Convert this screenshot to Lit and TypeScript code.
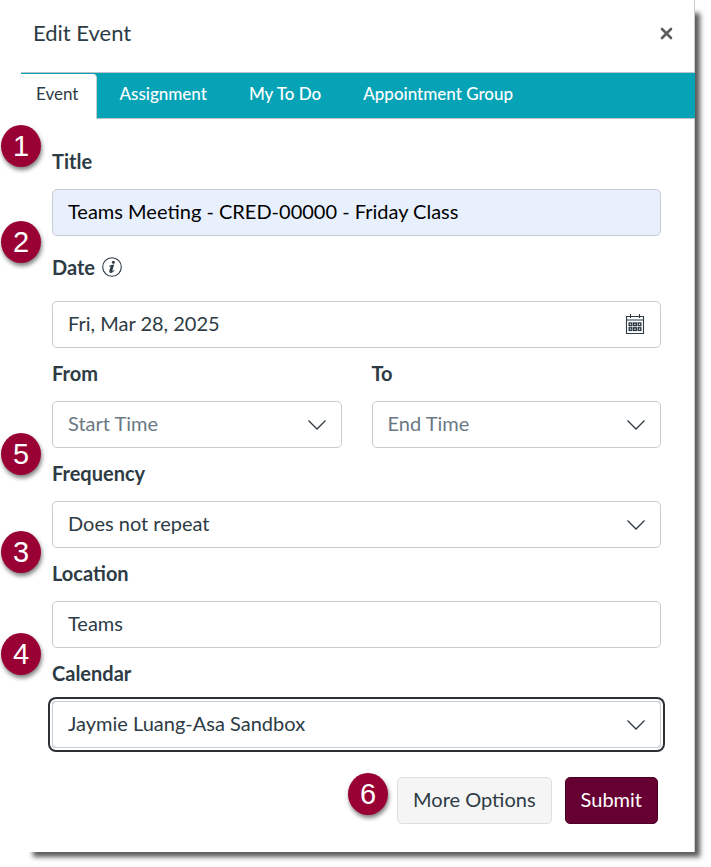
import { LitElement, html, css, svg, nothing } from "lit";
import { customElement, property } from "lit/decorators.js";
import { styleMap } from "lit/directives/style-map.js";

const chevron = html`<svg class="chevron" width="20" height="12" viewBox="0 0 20 12" aria-hidden="true">
  <path d="M1.5 1.5 L10 10 L18.5 1.5" fill="none" stroke="#2d3b45" stroke-width="1.3" />
</svg>`;

const calendarIcon = html`<svg width="20" height="22" viewBox="0 0 20 22" fill="none" stroke="#2d3b45" aria-hidden="true">
  <path d="M1.5 3.5 H18.5 V20.5 H1.5 Z M1.5 7 H18.5 M5.5 1 V5 M14.5 1 V5" stroke-width="1.1" />
  ${[4.2, 8.7, 13.2].map((x) => [10, 14.8].map((y) => svg`<rect x=${x} y=${y} width="2.6" height="2.6" stroke-width="1.4" />`))}
</svg>`;

const infoIcon = html`<svg width="20" height="20" viewBox="0 0 20 20" aria-hidden="true">
  <circle cx="10" cy="10" r="9.3" fill="none" stroke="#2d3b45" stroke-width="1.1" />
  <circle cx="11.4" cy="5.2" r="1.5" fill="#2d3b45" />
  <path d="M7 9.1 C8.4 8.2 10 7.9 12.2 7.6 L10.4 13.6 C10.2 14.5 10.8 14.2 12.1 12.7 L12.6 13.1 C11.2 15.4 9.6 16.1 8.4 15.9 C7.2 15.7 7.1 14.7 7.4 13.6 L8.6 9.5 C8.4 9 7.9 9.3 7.2 9.7 Z" fill="#2d3b45" />
</svg>`;

@customElement("step-badge")
export class StepBadge extends LitElement {
  @property({ type: Number }) step = 1;

  static styles = css`
    :host {
      display: flex;
      align-items: center;
      justify-content: center;
      width: 40px;
      height: 42px;
      border-radius: 50%;
      background: #990033;
      color: #fff;
      font: 29px/42px "Liberation Sans", Arial, sans-serif;
      box-shadow: 1px 3px 4px rgba(0, 0, 0, 0.5);
    }
  `;

  render() {
    return html`<span>${this.step}</span>`;
  }
}

@customElement("app-root")
export class AppRoot extends LitElement {
  static styles = css`
    :host {
      display: block;
      background: #fff;
      padding: 0 16px 15px 0;
      color: #2d3b45;
      font: 20px/24px Lato, "Liberation Sans", sans-serif;
    }
    * {
      box-sizing: border-box;
    }
    .dialog {
      position: relative;
      z-index: 0;
    }
    .dialog::before {
      content: "";
      position: absolute;
      z-index: -2;
      inset: 10px 0 0 30px;
      box-shadow: 4px 4px 5px 1px rgba(0, 0, 0, 0.65);
    }
    .dialog::after {
      content: "";
      position: absolute;
      z-index: -1;
      inset: 0;
      background: #fff;
      border-right: 1px solid #c7cdd1;
    }
    .header {
      display: flex;
      align-items: center;
      justify-content: space-between;
      height: 72px;
      padding: 0 19px 6px 33px;
    }
    .heading {
      margin: 0;
      font-size: 22px;
      font-weight: 400;
      line-height: 28px;
    }
    button {
      font: inherit;
      color: inherit;
      cursor: pointer;
    }
    .close {
      display: flex;
      padding: 3px;
      border: 0;
      background: none;
    }
    .tabs {
      display: flex;
      height: 47px;
      margin-left: 21px;
      background: #06a3b7;
      border: solid #b9c4c9;
      border-width: 1px 0;
    }
    .tab {
      padding: 0 21px 4px;
      border: 0;
      background: none;
      color: #fff;
      font-size: 17px;
      font-weight: 500;
    }
    .tab.active {
      margin: 1px 1px -1px 0;
      padding: 0 18px 5px 15px;
      background: #fff;
      border-right: 1px solid #c7cdd1;
      border-radius: 0 4px 0 0;
      color: #2d3b45;
      font-weight: 400;
    }
    .form {
      display: grid;
      gap: 13px;
      padding: 30px 34px 29px 52px;
    }
    .field {
      position: relative;
      display: grid;
      gap: 16px;
      min-width: 0;
    }
    .pair {
      display: grid;
      grid-template-columns: 1fr 1fr;
      gap: 30px;
    }
    .label-row {
      display: flex;
      align-items: center;
      gap: 7px;
    }
    .label-row.tall {
      height: 36px;
    }
    label {
      font-weight: 700;
    }
    .info,
    .pick {
      display: flex;
      padding: 0;
      border: 0;
      background: none;
    }
    .control {
      position: relative;
      display: grid;
      border-radius: 4px;
    }
    .control.focused {
      box-shadow: 0 0 0 2px #fff, 0 0 0 4px #2d3033;
    }
    input,
    select {
      width: 100%;
      height: 47px;
      margin: 0;
      padding: 0 48px 4px 15px;
      border: 1px solid #c7cdd1;
      border-radius: 5px;
      background: #fff;
      color: #2d3b45;
      font: inherit;
      appearance: none;
      outline: none;
    }
    select.empty {
      color: #6a7883;
    }
    input.filled {
      background: #e8f0fe;
      color: #000;
    }
    .chevron {
      position: absolute;
      right: 15px;
      top: 18px;
      pointer-events: none;
    }
    .pick {
      position: absolute;
      right: 16px;
      top: 12px;
    }
    .pin {
      position: absolute;
      left: -51px;
    }
    .footer {
      display: flex;
      align-items: center;
      justify-content: flex-end;
      gap: 13px;
      padding: 0 37px 28px 0;
    }
    .action {
      height: 47px;
      padding: 0 15px 4px;
      border: 1px solid #dcdfe1;
      border-radius: 5px;
      background: #f5f5f5;
    }
    .action.primary {
      background: #660033;
      border-color: #4d0026;
      color: #fff;
    }
    .with-badge {
      display: flex;
      gap: 9px;
    }
    .with-badge step-badge {
      margin-top: -4px;
    }
  `;

  private pin(step: number, rise: number) {
    return html`<step-badge class="pin" .step=${step} style=${styleMap({ top: `${-rise}px` })}></step-badge>`;
  }

  private select(id: string, label: string, value: string, opts: { empty?: boolean; focused?: boolean; pin?: unknown } = {}) {
    return html`<div class="field">
      ${opts.pin ?? nothing}
      <div class="label-row"><label for=${id}>${label}</label></div>
      <div class="control ${opts.focused ? "focused" : ""}">
        <select id=${id} class=${opts.empty ? "empty" : ""}>
          <option>${value}</option>
        </select>
        ${chevron}
      </div>
    </div>`;
  }

  render() {
    return html`<section class="dialog" role="dialog" aria-labelledby="heading">
      <header class="header">
        <h1 class="heading" id="heading">Edit Event</h1>
        <button class="close" type="button" aria-label="Close">
          <svg width="13" height="13" viewBox="0 0 13 13" aria-hidden="true">
            <path d="M2 2 L11 11 M11 2 L2 11" stroke="#5c5c5c" stroke-width="2.6" stroke-linecap="round" />
          </svg>
        </button>
      </header>
      <nav class="tabs" role="tablist">
        ${["Event", "Assignment", "My To Do", "Appointment Group"].map(
          (name, i) => html`<button class="tab ${i === 0 ? "active" : ""}" type="button" role="tab" aria-selected=${i === 0}>${name}</button>`
        )}
      </nav>
      <form class="form" id="event-form">
        <div class="field">
          ${this.pin(1, 24)}
          <div class="label-row"><label for="title">Title</label></div>
          <div class="control"><input id="title" class="filled" .value=${"Teams Meeting - CRED-00000 - Friday Class"} /></div>
        </div>
        <div class="field">
          ${this.pin(2, 28)}
          <div class="label-row tall">
            <label for="date">Date</label>
            <button class="info" type="button" aria-label="Date help">${infoIcon}</button>
          </div>
          <div class="control">
            <input id="date" .value=${"Fri, Mar 28, 2025"} />
            <button class="pick" type="button" aria-label="Choose a date">${calendarIcon}</button>
          </div>
        </div>
        <div class="pair">
          ${this.select("from", "From", "Start Time", { empty: true })}
          ${this.select("to", "To", "End Time", { empty: true })}
        </div>
        ${this.select("frequency", "Frequency", "Does not repeat", { pin: this.pin(5, 28) })}
        <div class="field">
          ${this.pin(3, 30)}
          <div class="label-row"><label for="location">Location</label></div>
          <div class="control"><input id="location" .value=${"Teams"} /></div>
        </div>
        ${this.select("calendar", "Calendar", "Jaymie Luang-Asa Sandbox", { focused: true, pin: this.pin(4, 28) })}
      </form>
      <footer class="footer">
        <div class="with-badge">
          <step-badge .step=${6}></step-badge>
          <button class="action" type="button">More Options</button>
        </div>
        <button class="action primary" type="submit" form="event-form">Submit</button>
      </footer>
    </section>`;
  }
}
